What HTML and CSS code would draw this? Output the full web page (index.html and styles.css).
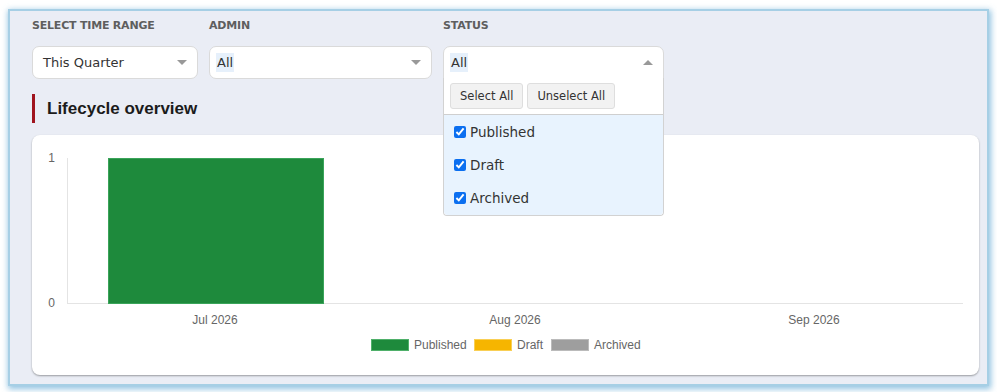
FILE: index.html
```html
<!DOCTYPE html>
<html lang="en">
<head>
  <meta charset="UTF-8">
  <meta name="viewport" content="width=device-width, initial-scale=1.0">
  <title>Lifecycle Report</title>
  <link rel="stylesheet" href="styles.css">
</head>
<body>

  <div class="panel">

    <!-- Filters -->
    <div class="filters">
      <div class="filter filter-range">
        <label>Select Time Range</label>
        <div class="select">
          <span class="value">This Quarter</span>
          <span class="caret"></span>
        </div>
      </div>
      <div class="filter filter-admin">
        <label>Admin</label>
        <div class="select select-multi">
          <span class="chip">All</span>
          <span class="caret"></span>
        </div>
      </div>
      <div class="filter filter-status">
        <label>Status</label>
        <div class="select select-multi open">
          <span class="chip">All</span>
          <span class="caret up"></span>
        </div>
        <div class="dropdown">
          <div class="dropdown-actions">
            <button>Select All</button>
            <button>Unselect All</button>
          </div>
          <ul class="dropdown-options">
            <li><input type="checkbox" checked> Published</li>
            <li><input type="checkbox" checked> Draft</li>
            <li><input type="checkbox" checked> Archived</li>
          </ul>
        </div>
      </div>
    </div>

    <!-- Title -->
    <h2 class="section-title">Lifecycle overview</h2>

    <!-- Chart -->
    <div class="chart-card">
      <svg class="chart" width="947" height="240" viewBox="0 0 947 240">
        <line x1="35.5" y1="23" x2="35.5" y2="168" stroke="#e4e4e4"/>
        <line x1="35" y1="168.5" x2="931" y2="168.5" stroke="#e4e4e4"/>
        <text x="23" y="27" text-anchor="end">1</text>
        <text x="23" y="172" text-anchor="end">0</text>
        <rect x="76.5" y="23.5" width="215" height="145" fill="#1e8a3c" stroke="#3aa45a"/>
        <text x="183" y="189" text-anchor="middle">Jul 2026</text>
        <text x="483" y="189" text-anchor="middle">Aug 2026</text>
        <text x="782" y="189" text-anchor="middle">Sep 2026</text>
        <rect x="339.5" y="204.5" width="37" height="11" fill="#1e8a3c" stroke="#4fb06a"/>
        <text x="382" y="214">Published</text>
        <rect x="442.5" y="204.5" width="37" height="11" fill="#f6b500" stroke="#f9cf55"/>
        <text x="485" y="214">Draft</text>
        <rect x="519.5" y="204.5" width="37" height="11" fill="#9e9e9e" stroke="#bbbbbb"/>
        <text x="562" y="214">Archived</text>
      </svg>
    </div>

  </div>

</body>
</html>
```

FILE: styles.css
```css
* {
  margin: 0;
  padding: 0;
  box-sizing: border-box;
}
body {
  background-color: #ffffff;
  padding: 11px 10px 9px 10px;
  font-family: "DejaVu Sans", sans-serif;
}
.panel {
  background-color: #eaedf5;
  box-shadow: 0 0 0 2px #a6cfe5, 1px 2px 6px 3px rgba(110, 175, 215, 0.75);
  padding: 8px 8px 8px 22px;
  height: 373px;
}
.filters {
  display: flex;
  gap: 11px;
}
.filter {
  position: relative;
}
.filter-range { width: 166px; }
.filter-admin { width: 223px; }
.filter-status { width: 221px; }
.filter label {
  display: block;
  font-size: 11px;
  font-weight: bold;
  color: #5e5e5e;
  text-transform: uppercase;
  letter-spacing: -0.2px;
  height: 14px;
  line-height: 14px;
  margin-bottom: 13px;
}
.select {
  height: 33px;
  background-color: #fff;
  border: 1px solid #dadada;
  border-radius: 7px;
  display: flex;
  align-items: center;
  justify-content: space-between;
  padding: 0 10px 0 10px;
  font-size: 13px;
  color: #333;
}
.select-multi {
  padding-left: 6px;
}
.select.open {
  border-bottom-left-radius: 0;
  border-bottom-right-radius: 0;
}
.chip {
  background-color: #e6f0fb;
  padding: 2px 1px;
  line-height: 15px;
}
.caret {
  width: 0;
  height: 0;
  border-left: 5px solid transparent;
  border-right: 5px solid transparent;
  border-top: 5px solid #999;
}
.caret.up {
  border-top: none;
  border-bottom: 5px solid #999;
}
.dropdown {
  position: absolute;
  top: 59px;
  left: 0;
  width: 221px;
  background-color: #fff;
  border: 1px solid #d2d2d2;
  border-top: none;
  border-radius: 0 0 4px 4px;
  z-index: 2;
}
.dropdown-actions {
  display: flex;
  gap: 4px;
  padding: 5px 6px 5px 6px;
  border-bottom: 1px solid #cfcfcf;
}
.dropdown-actions button {
  height: 26px;
  padding: 0 9px;
  font-family: "DejaVu Sans", sans-serif;
  font-size: 11.5px;
  color: #333;
  background-color: #f2f2f2;
  border: 1px solid #dedede;
  border-radius: 3px;
}
.dropdown-options {
  list-style: none;
  background-color: #e8f3fe;
  padding: 0 0 1px 0;
  border-radius: 0 0 4px 4px;
}
.dropdown-options li {
  height: 33px;
  display: flex;
  align-items: center;
  gap: 4px;
  padding-left: 10px;
  font-size: 13.5px;
  color: #333;
}
.dropdown-options input {
  width: 12px;
  height: 12px;
  margin: 0;
  accent-color: #0b6ff0;
}
.section-title {
  margin-top: 15px;
  height: 29px;
  border-left: 3px solid #a0141e;
  padding-left: 12px;
  display: flex;
  align-items: center;
  font-family: "Liberation Sans", Arial, sans-serif;
  font-size: 17px;
  font-weight: bold;
  color: #1b1b1b;
}
.chart-card {
  margin-top: 12px;
  height: 240px;
  background-color: #fff;
  border-radius: 8px;
  box-shadow: 0 1px 2px rgba(0, 0, 0, 0.35);
}
.chart {
  display: block;
}
.chart text {
  font-family: "Liberation Sans", Arial, sans-serif;
  font-size: 12px;
  fill: #666;
}
```
